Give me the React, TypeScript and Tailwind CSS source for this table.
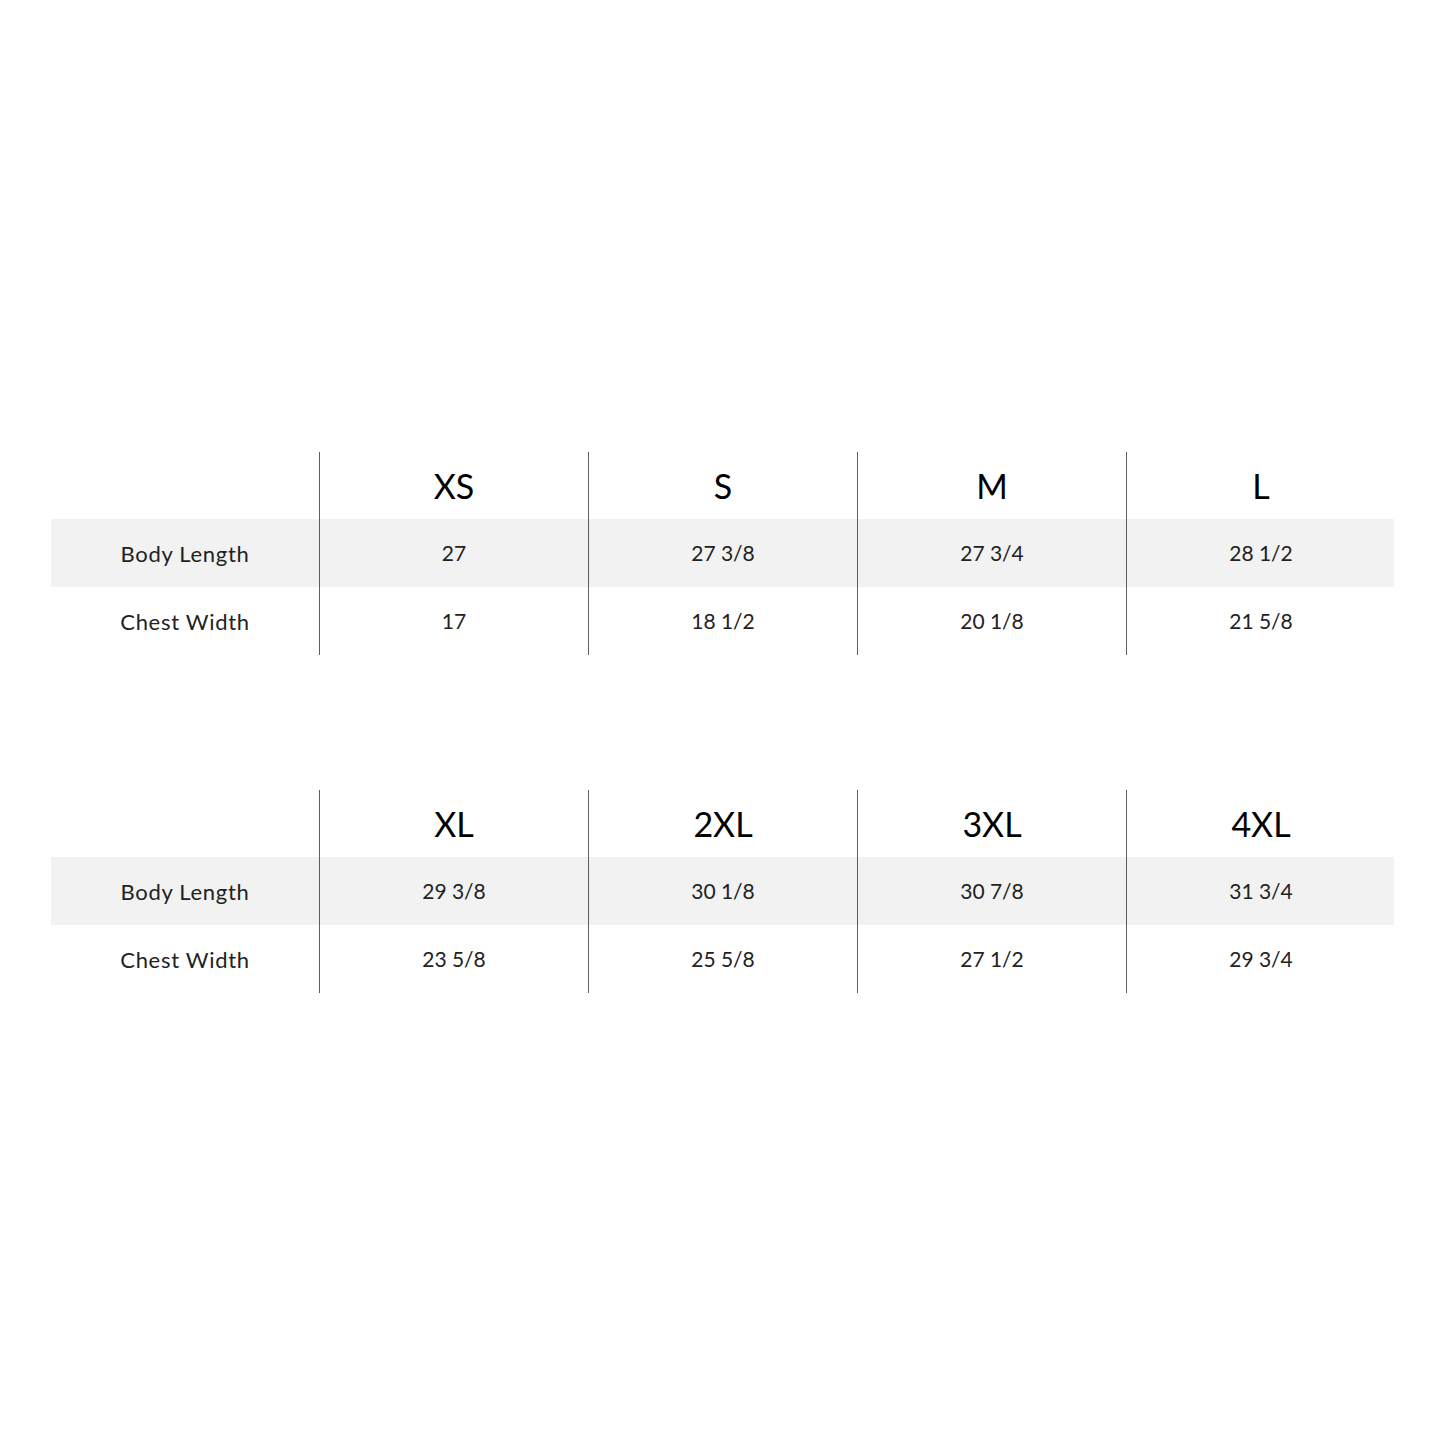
const tables = [
  {
    sizes: ["XS", "S", "M", "L"],
    body: ["27", "27 3/8", "27 3/4", "28 1/2"],
    chest: ["17", "18 1/2", "20 1/8", "21 5/8"],
  },
  {
    sizes: ["XL", "2XL", "3XL", "4XL"],
    body: ["29 3/8", "30 1/8", "30 7/8", "31 3/4"],
    chest: ["23 5/8", "25 5/8", "27 1/2", "29 3/4"],
  },
];

function Row({ label, values, head, shaded }: { label: string; values: string[]; head?: boolean; shaded?: boolean }) {
  return (
    <div
      className={`grid grid-cols-[268px_repeat(4,269px)] ${head ? "h-[67px]" : "h-[68px]"} ${
        shaded ? "bg-[#f1f2f1]" : ""
      }`}
    >
      <div className="flex items-center justify-center text-[22px] tracking-[0.7px] text-[#222]">{label}</div>
      {values.map((v) => (
        <div
          key={v}
          className={`flex items-center justify-center border-l border-[#5e5e5e] ${
            head ? "text-[34px] text-black" : "text-[21px] text-[#222]"
          }`}
        >
          {v}
        </div>
      ))}
    </div>
  );
}

export default function App() {
  return (
    <div className="min-h-[1445px] w-[1445px] bg-white px-[51px] pt-[452px] font-['Lato',sans-serif]">
      <div className="flex flex-col gap-[135px]">
        {tables.map((t) => (
          <div key={t.sizes[0]} className="flex flex-col">
            <Row label="" values={t.sizes} head />
            <Row label="Body Length" values={t.body} shaded />
            <Row label="Chest Width" values={t.chest} />
          </div>
        ))}
      </div>
    </div>
  );
}
